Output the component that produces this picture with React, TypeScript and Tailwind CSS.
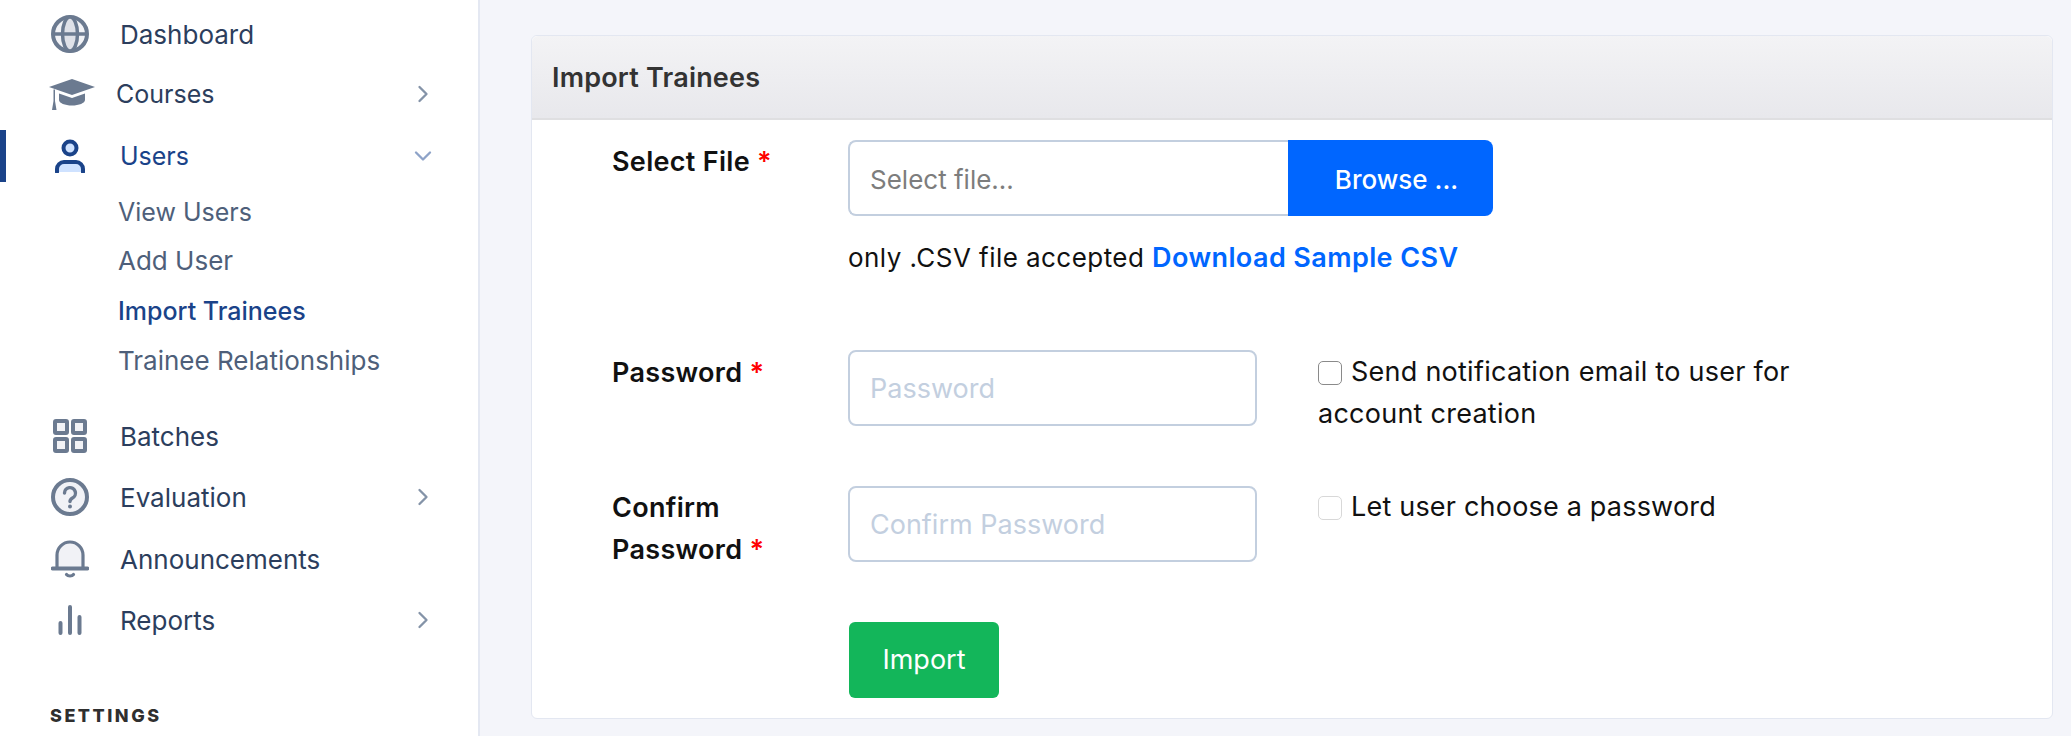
import type { ReactNode } from 'react'
import { ChevronDown, ChevronRight } from 'lucide-react'

const font = { fontFamily: 'Inter, "Open Sans", sans-serif' }

function GlobeIcon() {
    return (
        <svg viewBox="0 0 38 38" className="h-[38px] w-[38px]" fill="none" stroke="#6b7a90" strokeWidth="4">
            <circle cx="19" cy="19" r="17" fill="#f1f2f6" />
            <ellipse cx="19" cy="19" rx="7.500" ry="17" fill="#dfe1e8" strokeWidth="3.500" />
            <path d="M2 19h34" strokeWidth="3.500" />
        </svg>
    )
}

function CapIcon() {
    return (
        <svg viewBox="0 0 46 31" className="ml-[3px] h-[31px] w-[46px] shrink-0" fill="#6b7a90">
            <path d="M23 0 46 8 23 16 0 8z" />
            <path d="M10 14.500 23 19l13-4.500V21c0 3-6 5.500-13 5.500S10 24 10 21z" />
            <path d="M4.500 10.500h1.500V22l1.500 9h-4.500l1.500-9z" />
        </svg>
    )
}

function PersonIcon() {
    return (
        <svg viewBox="0 0 32 34" className="h-[34px] w-[32px]" fill="none" stroke="#1a4389" strokeWidth="4">
            <circle cx="16" cy="9" r="6.500" fill="#cfe2ff" />
            <path d="M3 33v-3a7 7 0 0 1 7-7h12a7 7 0 0 1 7 7v3" fill="#cfe2ff" strokeLinecap="round" />
        </svg>
    )
}

function GridIcon() {
    return (
        <svg viewBox="0 0 34 34" className="h-[34px] w-[34px]" fill="#f1f2f6" stroke="#6b7a90" strokeWidth="4">
            <rect x="2" y="2" width="12" height="12" rx="1" />
            <rect x="20" y="2" width="12" height="12" rx="1" />
            <rect x="2" y="20" width="12" height="12" rx="1" />
            <rect x="20" y="20" width="12" height="12" rx="1" />
        </svg>
    )
}

function QuestionIcon() {
    return (
        <svg viewBox="0 0 38 38" className="h-[38px] w-[38px]" fill="none" stroke="#6b7a90" strokeWidth="4">
            <circle cx="19" cy="19" r="17" fill="#f1f2f6" />
            <path d="M13.500 15a5.500 5.500 0 1 1 8 5c-1.800 1-2.500 2-2.500 3.500" strokeWidth="3.400" strokeLinecap="round" />
            <circle cx="19" cy="28.500" r="2" fill="#6b7a90" stroke="none" />
        </svg>
    )
}

function BellIcon() {
    return (
        <svg viewBox="0 0 38 38" className="h-[38px] w-[38px]" fill="none" stroke="#6b7a90" strokeWidth="3.200">
            <path d="M6 28V15a13 13 0 0 1 26 0v13" fill="#f1f2f6" />
            <path d="M1.500 28.500h35" strokeWidth="3.800" strokeLinecap="round" />
            <path d="M15.500 34.500c1.500 2 5.500 2 7 0" strokeLinecap="round" />
        </svg>
    )
}

function BarsIcon() {
    return (
        <svg viewBox="0 0 24 30" className="h-[30px] w-[24px]" fill="none" stroke="#6b7a90" strokeWidth="4" strokeLinecap="round">
            <path d="M2.500 18v10M12 2v26M21.500 12v16" />
        </svg>
    )
}

type NavItem = { label: string; icon: ReactNode; row: string; text?: string; more?: boolean }

function IconSlot({ children }: { children: ReactNode }) {
    return (
        <div className="w-[120px] shrink-0 pl-[51px]">
            <div className="flex w-[38px] justify-center">{children}</div>
        </div>
    )
}

function NavRow({ label, icon, row, text, more }: NavItem) {
    return (
        <div className={`flex items-center ${row}`}>
            <IconSlot>{icon}</IconSlot>
            <span className={`text-[#2c3e5d] ${text ?? 'text-[26px]'}`}>{label}</span>
            {more ? <ChevronRight className="mr-[41px] ml-auto h-[28px] w-[28px] text-[#8493a8]" strokeWidth={2} /> : null}
        </div>
    )
}

function Required({ children, className }: { children: ReactNode; className?: string }) {
    return (
        <label className={`w-[236px] shrink-0 text-[27px] leading-[42px] font-semibold tracking-[0.300px] text-[#111] ${className ?? ''}`}>
            {children} <span className="text-[#f00]">*</span>
        </label>
    )
}

function Sidebar() {
    const subItems = [
        { label: 'View Users', cls: 'h-[49px] text-[25px] text-[#4e5f7a]' },
        { label: 'Add User', cls: 'h-[50px] text-[26px] text-[#4e5f7a]' },
        { label: 'Import Trainees', cls: 'h-[50px] text-[25px] font-medium text-[#1a4389]' },
        { label: 'Trainee Relationships', cls: 'h-[50px] text-[26px] text-[#4e5f7a]' },
    ]
    return (
        <aside className="flex h-[736px] w-[480px] shrink-0 flex-col overflow-hidden border-r-2 border-[#e4e8f2] bg-white pt-[4px]">
            <NavRow label="Dashboard" icon={<GlobeIcon />} row="h-[60px]" text="pt-[1px] text-[26px]" />
            <NavRow label="Courses" icon={<CapIcon />} row="h-[60px]" text="-ml-[4px] pt-[2px] text-[25px]" more />
            <div className="relative flex h-[63px] items-center">
                <div className="absolute top-[6px] left-0 h-[52px] w-[6px] bg-[#1a4389]" />
                <IconSlot><PersonIcon /></IconSlot>
                <span className="pt-[2px] text-[25px] text-[#1a4389]">Users</span>
                <ChevronDown className="mr-[41px] ml-auto h-[28px] w-[28px] text-[#8ea3c8]" strokeWidth={2} />
            </div>
            <div className="flex flex-col pl-[118px]">
                {subItems.map((item) => (
                    <div key={item.label} className={`flex items-center leading-[36px] ${item.cls}`}>{item.label}</div>
                ))}
            </div>
            <div className="h-[20px]" />
            <NavRow label="Batches" icon={<GridIcon />} row="h-[60px]" />
            <NavRow label="Evaluation" icon={<QuestionIcon />} row="h-[62px]" more />
            <NavRow label="Announcements" icon={<BellIcon />} row="h-[62px]" />
            <NavRow label="Reports" icon={<BarsIcon />} row="h-[60px]" more />
            <div className="mt-[55px] pl-[50px] text-[18px] leading-[22px] font-extrabold tracking-[2.500px] text-[#2f2f2f]">SETTINGS</div>
        </aside>
    )
}

export default function App() {
    return (
        <div className="flex h-[736px] w-[2071px] overflow-hidden bg-[#f4f5fa]" style={font}>
            <Sidebar />
            <main className="flex-1 pt-[35px] pr-[18px] pb-[17px] pl-[51px]">
                <div className="flex h-full flex-col rounded-[6px] border border-[#e3e7f1] bg-white">
                    <div className="flex h-[84px] shrink-0 items-center rounded-t-[6px] border-b-2 border-[#dfdfe1] bg-gradient-to-b from-[#f3f3f5] to-[#e8e8ec] pt-[3px] pl-[20px] text-[27px] font-semibold tracking-[0.200px] text-[#333]">
                        Import Trainees
                    </div>
                    <div className="flex flex-col pt-[20px] pl-[80px]">
                        <div className="flex">
                            <Required className="pt-[1px]">Select File</Required>
                            <div>
                                <div className="flex h-[76px] w-[645px]">
                                    <div className="flex flex-1 items-center rounded-l-[8px] border-2 border-r-0 border-[#c3cfdf] pt-[2px] pl-[20px] text-[26px] text-[#7d7d7d]">Select file...</div>
                                    <button className="w-[205px] rounded-r-[8px] bg-[#0066ff] pt-[2px] pl-[12px] text-[26px] font-medium text-white">Browse ...</button>
                                </div>
                                <p className="mt-[21px] text-[26px] leading-[42px] tracking-[0.450px] text-[#111]">
                                    only .CSV file accepted <a className="text-[27px] font-semibold tracking-[0.400px] text-[#0066ff]">Download Sample CSV</a>
                                </p>
                            </div>
                        </div>
                        <div className="mt-[71px] flex h-[76px]">
                            <Required className="pt-[2px]">Password</Required>
                            <div className="flex h-[76px] w-[409px] items-center rounded-[8px] border-2 border-[#c3cfdf] pt-[2px] pl-[20px] text-[27px] text-[#c3cfdf]">Password</div>
                            <div className="ml-[61px] w-[500px] pt-[1px] text-[27px] leading-[42px] tracking-[0.250px] text-[#111]">
                                <span className="mr-[9px] inline-block h-[24px] w-[24px] translate-y-[4px] rounded-[5px] border border-[#8a8a8a] bg-white" />
                                Send notification email to user for account creation
                            </div>
                        </div>
                        <div className="mt-[60px] flex h-[76px]">
                            <Required className="pt-[1px]">Confirm<br />Password</Required>
                            <div className="flex h-[76px] w-[409px] items-center rounded-[8px] border-2 border-[#c3cfdf] pt-[2px] pl-[20px] text-[27px] text-[#c3cfdf]">Confirm Password</div>
                            <div className="ml-[61px] text-[27px] leading-[42px] tracking-[0.200px] text-[#111]">
                                <span className="mr-[9px] inline-block h-[24px] w-[24px] translate-y-[4px] rounded-[5px] border border-[#d8d8d8] bg-white" />
                                Let user choose a password
                            </div>
                        </div>
                        <button className="mt-[60px] ml-[237px] h-[76px] w-[150px] rounded-[6px] bg-[#13b65a] text-[27px] text-white">Import</button>
                    </div>
                </div>
            </main>
        </div>
    )
}
